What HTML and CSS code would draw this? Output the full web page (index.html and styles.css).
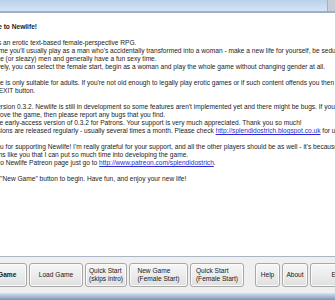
FILE: index.html
```html
<!DOCTYPE html>
<html lang="en">
<head>
    <meta charset="UTF-8">
    <title>Newlife</title>
    <link rel="stylesheet" href="styles.css">
</head>
<body>
    <div class="window">
        <div class="titlebar">
            <span class="titlebar-btn"></span>
        </div>

        <div class="content">
            <div class="intro">
                <p class="title">Welcome to Newlife!</p>
                <p>Newlife is an erotic text-based female-perspective RPG.<br>
                In the game you'll usually play as a man who's accidentally transformed into a woman - make a new life for yourself, be seduced by<br>
                handsome (or sleazy) men and generally have a fun sexy time.<br>
                Alternatively, you can select the female start, begin as a woman and play the whole game without changing gender at all.</p>
                <p>This game is only suitable for adults. If you're not old enough to legally play erotic games or if such content offends you then please<br>
                click the EXIT button.</p>
                <p>This is version 0.3.2. Newlife is still in development so some features aren't implemented yet and there might be bugs. If you want to<br>
                help improve the game, then please report any bugs that you find.<br>
                This is the early-access version of 0.3.2 for Patrons. Your support is very much appreciated. Thank you so much!<br>
                New versions are released regularly - usually several times a month. Please check <a href="#">http://splendidostrich.blogspot.co.uk</a> for updates.</p>
                <p>Thank you for supporting Newlife! I'm really grateful for your support, and all the other players should be as well - it's because of<br>
                my patrons like you that I can put so much time into developing the game.<br>
                To head to Newlife Patreon page just go to <a href="#">http://www.patreon.com/splendidostrich</a>.</p>
                <p>Click the "New Game" button to begin. Have fun, and enjoy your new life!</p>
            </div>
        </div>

        <div class="buttonbar">
            <div class="buttons">
                <button class="btn btn-new"><span>New Game</span></button>
                <button class="btn btn-load"><span>Load Game</span></button>
                <button class="btn btn-quick"><span>Quick Start<br>(skips intro)</span></button>
                <button class="btn btn-female"><span>New Game<br>(Female Start)</span></button>
                <button class="btn btn-quickf"><span>Quick Start<br>(Female Start)</span></button>
                <button class="btn btn-help"><span>Help</span></button>
                <button class="btn btn-about"><span>About</span></button>
                <button class="btn btn-exit"><span>Exit</span></button>
            </div>
        </div>

        <div class="frame-bottom"></div>
    </div>
</body>
</html>
```

FILE: styles.css
```css
body {
    margin: 0;
    padding: 0;
    font-family: 'Liberation Sans', Arial, sans-serif;
    background: #ffffff;
    overflow: hidden;
}

.window {
    width: 335px;
    height: 300px;
    display: flex;
    flex-direction: column;
    overflow: hidden;
}

.titlebar {
    height: 11px;
    background: linear-gradient(#b9d1ea, #d3e5f6);
    border-bottom: 2px solid #9cafc4;
    display: flex;
    justify-content: flex-end;
}

.titlebar-btn {
    width: 7px;
    height: 11px;
    background: #c9ced4;
    border-left: 1px solid #a9b0b8;
}

.content {
    flex: 1;
    background: #ffffff;
    overflow: hidden;
}

.intro {
    margin-left: -27px;
    padding-top: 10px;
    font-size: 6.6px;
    line-height: 8px;
    color: #1c1c1c;
    white-space: nowrap;
}

.intro p {
    margin: 0 0 8px 0;
}

.intro .title {
    font-weight: bold;
}

.intro a {
    color: #2b2bd6;
    text-decoration: underline;
}

.buttonbar {
    height: 36px;
    background: #efefef;
    border-top: 1px solid #aab6c3;
    overflow: hidden;
}

.buttons {
    display: flex;
    gap: 2px;
    margin-left: -28px;
    padding-top: 6px;
}

.btn {
    height: 24px;
    flex: none;
    box-sizing: border-box;
    padding: 0;
    border: 1px solid #a8a8a8;
    border-radius: 3px;
    background: linear-gradient(#f6f6f6 0%, #ececec 50%, #dfdfdf 100%);
    box-shadow: inset 0 0 0 1px #fbfbfb;
    font-family: 'Liberation Sans', Arial, sans-serif;
    font-size: 6.6px;
    line-height: 8px;
    color: #1a1a1a;
    display: flex;
    align-items: center;
    justify-content: center;
}

.btn span {
    text-align: left;
    white-space: nowrap;
}

.btn-new { width: 55px; font-weight: bold; }
.btn-load { width: 54px; }
.btn-quick { width: 42px; }
.btn-female { width: 59px; }
.btn-quickf { width: 54px; margin-right: 9px; }
.btn-help { width: 25px; }
.btn-about { width: 26px; }
.btn-exit { width: 54px; }

.frame-bottom {
    height: 7px;
    background: linear-gradient(#d4e3f2, #9db6d0 60%, #7d93ab);
}
```
